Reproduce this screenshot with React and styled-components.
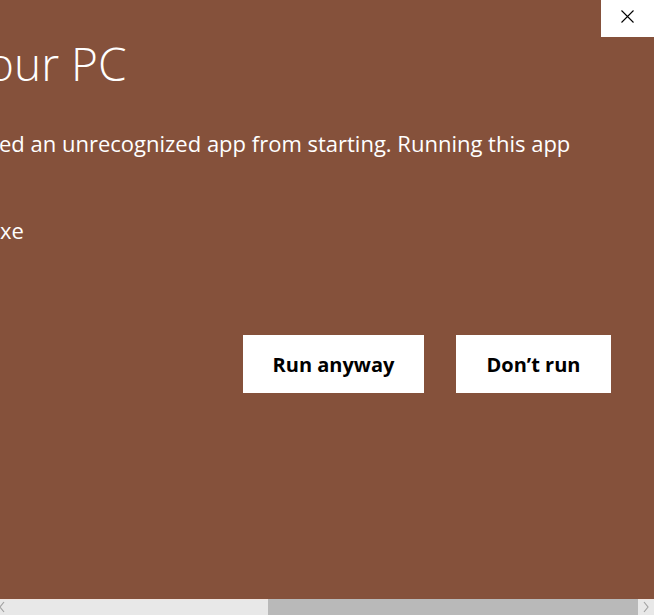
import React from "react";
import styled, { createGlobalStyle } from "styled-components";

const Global = createGlobalStyle`
  html, body { margin: 0; padding: 0; }
  body { font-family: "Open Sans", "Noto Sans", sans-serif; overflow: hidden; }
`;

const Page = styled.div`
  width: 654px;
  height: 615px;
  display: flex;
  flex-direction: column;
`;

const Viewport = styled.main`
  flex: 1;
  position: relative;
  overflow: hidden;
  background: #85513b;
  color: #ffffff;
`;

const OFFSET = 420;

const Dialog = styled.section`
  margin-left: -${OFFSET}px;
  padding: 31px 43px 0 0;
  display: flex;
  flex-direction: column;
`;

const Line = styled.div`
  display: flex;
  white-space: nowrap;
  font-size: ${(p) => p.$size}px;
  font-weight: ${(p) => p.$weight || 400};
  line-height: ${(p) => p.$lh}px;
  margin-top: ${(p) => p.$mt || 0}px;
`;

const Hidden = styled.span`
  flex: 0 0 ${(p) => OFFSET + (p.$shift || 0)}px;
  display: flex;
  justify-content: flex-end;
  overflow: hidden;
`;

const Actions = styled.div`
  display: flex;
  justify-content: flex-end;
  gap: 32px;
  margin-top: 60px;
`;

const Button = styled.button`
  width: ${(p) => p.$w}px;
  height: 58px;
  border: none;
  background: #ffffff;
  color: #000000;
  font-family: "Open Sans", "Noto Sans", sans-serif;
  font-size: 20px;
  font-weight: 700;
  padding: 0;
  cursor: pointer;
`;

const Close = styled.button`
  position: absolute;
  top: 0;
  right: 0;
  width: 53px;
  height: 37px;
  border: none;
  background: #ffffff;
  display: flex;
  align-items: flex-start;
  justify-content: center;
  padding: 10px 0 0 0;
`;

const ScrollBar = styled.div`
  height: 16px;
  flex: 0 0 16px;
  display: flex;
  background: #e8e8e8;
  box-shadow: inset 0 1px 0 #efe6e2;
  overflow: hidden;
`;

const Arrow = styled.div`
  flex: 0 0 16px;
  display: flex;
  align-items: center;
  justify-content: center;
  margin-left: ${(p) => p.$ml || 0}px;
`;

const Track = styled.div`
  flex: 1;
  display: flex;
`;

const Thumb = styled.div`
  margin-left: auto;
  flex: 0 0 370px;
  background: #b9b9b9;
`;

const Chevron = ({ dir }) => (
  <svg width="8" height="12" viewBox="0 0 8 12">
    <polyline
      points={dir === "left" ? "6,1 2,6 6,11" : "2,1 6,6 2,11"}
      fill="none"
      stroke="#a3a3a3"
      strokeWidth="1.2"
    />
  </svg>
);

export default function App() {
  return (
    <Page>
      <Global />
      <Viewport>
        <Close aria-label="Close">
          <svg width="13" height="13" viewBox="0 0 13 13">
            <path d="M0.5 0.5 L12.5 12.5 M12.5 0.5 L0.5 12.5" stroke="#000" strokeWidth="1.1" />
          </svg>
        </Close>
        <Dialog>
          <Line $size={46} $weight={300} $lh={64}>
            <Hidden $shift={-13}>Windows protected y</Hidden>
            <span>our PC</span>
          </Line>
          <Line $size={22} $lh={30} $mt={33}>
            <Hidden $shift={-1}>Microsoft Defender SmartScreen prevent</Hidden>
            <span>ed an unrecognized app from starting. Running this app</span>
          </Line>
          <Line $size={22} $lh={30}>
            <Hidden>might put your PC at risk.</Hidden>
          </Line>
          <Line $size={22} $lh={30} $mt={27}>
            <Hidden>App: setup.e</Hidden>
            <span>xe</span>
          </Line>
          <Line $size={22} $lh={30}>
            <Hidden>Publisher: Unknown publisher</Hidden>
          </Line>
          <Actions>
            <Button $w={181}>Run anyway</Button>
            <Button $w={155}>Don’t run</Button>
          </Actions>
        </Dialog>
      </Viewport>
      <ScrollBar>
        <Arrow $ml={-6}>
          <Chevron dir="left" />
        </Arrow>
        <Track>
          <Thumb />
        </Track>
        <Arrow>
          <Chevron dir="right" />
        </Arrow>
      </ScrollBar>
    </Page>
  );
}
